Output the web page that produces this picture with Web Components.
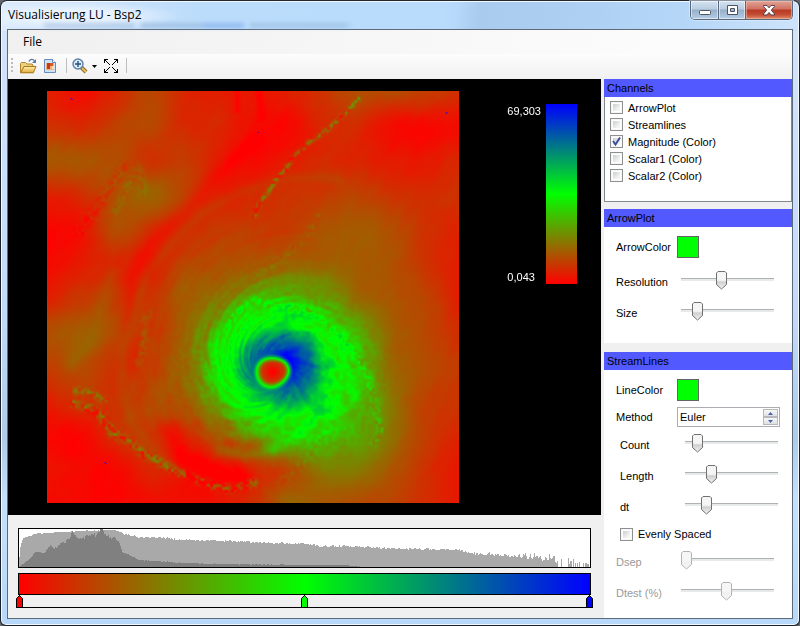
<!DOCTYPE html>
<html lang="de">
<head>
<meta charset="utf-8">
<title>Visualisierung LU - Bsp2</title>
<style>
  html, body { margin: 0; height: 100%; }
  body { background: #62666c; font: 11px/14px "Liberation Sans", Arial, sans-serif; color: #000; }
  .arrows color-row { margin-bottom: 2px; }
</style>
</head>
<body>
<app-window>
  <title-bar slot="title">Visualisierung LU - Bsp2</title-bar>
  <menu-strip slot="menu">File</menu-strip>
  <tool-strip slot="tools"></tool-strip>
  <field-view slot="view" high="69,303" low="0,043"></field-view>
  <transfer-editor slot="editor"></transfer-editor>
  <side-panel slot="side" heading="Channels" class="list" style="--body-border:1px solid #828790">
    <check-row label="ArrowPlot"></check-row>
    <check-row label="Streamlines"></check-row>
    <check-row label="Magnitude (Color)" checked></check-row>
    <check-row label="Scalar1 (Color)"></check-row>
    <check-row label="Scalar2 (Color)"></check-row>
  </side-panel>
  <side-panel slot="side" heading="ArrowPlot" class="arrows">
    <color-row label="ArrowColor"></color-row>
    <slider-row label="Resolution" value="43"></slider-row>
    <slider-row label="Size" value="14"></slider-row>
  </side-panel>
  <side-panel slot="side" heading="StreamLines" class="streams">
    <color-row label="LineColor"></color-row>
    <spin-row label="Method" value="Euler"></spin-row>
    <slider-row inset label="Count" value="8"></slider-row>
    <slider-row inset label="Length" value="26"></slider-row>
    <slider-row inset label="dt" value="19"></slider-row>
    <check-row wide label="Evenly Spaced"></check-row>
    <slider-row disabled label="Dsep" value="0"></slider-row>
    <slider-row disabled label="Dtest (%)" value="49"></slider-row>
  </side-panel>
</app-window>

<script>
const define = (name, render, after) => customElements.define(name, class extends HTMLElement {
  constructor() {
    super();
    this.attachShadow({ mode: 'open' });
  }
  connectedCallback() {
    this.shadowRoot.innerHTML = '<style>*{box-sizing:border-box}</style>' + render(this);
    if (after) after(this.shadowRoot, this);
  }
});
const attr = (el, n) => el.getAttribute(n) || '';

define('app-window', () => `
<style>
  :host { display: flex; flex-direction: column; box-sizing: border-box; height: 100vh; min-height: 626px; padding: 0 7px 7px;
    border: 1px solid #1c222b; border-top-color: #23272e; border-radius: 7px 7px 6px 6px;
    box-shadow: inset 0 0 0 1px #f2f8ff;
    background:
      radial-gradient(ellipse 110px 14px at 70px 15px, #e8f3ff 0 40%, #e8f3ff00 100%) top / 100% 30px no-repeat,
      linear-gradient(100deg, #0000 0 57%, #a9cbee 60%, #b0d2f400 78%) top / 100% 30px no-repeat,
      linear-gradient(90deg, #dceafa, #bbdcfb 25%, #b9dcfc 55%, #acd0f3 65%, #b4d6f7 85%, #cde3fb) top / 100% 30px no-repeat,
      linear-gradient(#d3e5fa, #c2dafa 50%, #aecbea 70%, #c5e0fb 80%, #b7d8f9); }
  .client { flex: 1; display: flex; flex-direction: column; min-height: 0; border: 1px solid #5d6a7a; margin: 0 -1px -1px; background: #f0f0f0; }
  main { flex: 1; display: flex; gap: 3px; min-height: 0; }
  .left { flex: 1; min-width: 0; display: flex; flex-direction: column; }
  ::slotted([slot=view]) { flex: 1; min-height: 0; }
  aside { flex: 0 0 188px; min-width: 0; display: flex; flex-direction: column; }
  ::slotted(.list) { flex: 0 0 123px; margin-bottom: 7px; }
  ::slotted(.arrows) { flex: 0 0 134px; margin-bottom: 9px; }
  ::slotted(.streams) { flex: 1; }
</style>
<slot name="title"></slot>
<div class="client">
  <slot name="menu"></slot>
  <slot name="tools"></slot>
  <main>
    <div class="left"><slot name="view"></slot><slot name="editor"></slot></div>
    <aside><slot name="side"></slot></aside>
  </main>
</div>`);

define('title-bar', () => `
<style>
  :host { position: relative; flex: 0 0 28px; display: flex; justify-content: space-between; align-items: flex-start; }
  h1 { margin: 0; padding: 5px 0 0; font: 12px/18px "Open Sans", "Noto Sans", sans-serif; }
  .ghost { position: absolute; left: 36px; top: 22px; width: 310px; height: 5px; filter: blur(2px); opacity: .45;
    background: linear-gradient(90deg, #8caad0 0 90px, #0000 90px 97px, #7d9fc9 97px 160px, #5f8fe0 160px 200px, #0000 200px 206px, #86aace 206px 300px, #0000 310px); }
  .buttons { display: flex; margin-right: -1px; height: 19px; border: 1px solid #56677e; border-top: 0; border-radius: 0 0 5px 5px; overflow: hidden; box-shadow: 0 0 0 1px #e4f1ff88; }
  button { display: grid; place-items: center; width: 28px; padding: 0; border: 0; border-right: 1px solid #56677e;
    background: linear-gradient(#d4e3f2, #b9cce0 45%, #98afc9 50%, #b5cde6); box-shadow: inset 0 0 0 1px #ffffff88; }
  .max { width: 27px; }
  .close { width: 46px; border: 0; background: linear-gradient(#e3a394, #d07062 45%, #b93822 50%, #c34c34 75%, #e08b6b); box-shadow: inset 0 0 0 1px #f6c4b588; }
</style>
<h1><slot></slot></h1><div class="ghost"></div>
<div class="buttons">
  <button aria-label="Minimieren"><svg width="14" height="14"><rect x="1.5" y="7.500" width="11" height="4" rx="1" fill="#fff" stroke="#4b5563"/></svg></button>
  <button class="max" aria-label="Maximieren"><svg width="13" height="12"><path fill="#fff" stroke="#4b5563" fill-rule="evenodd" d="M1.500 1.500h10v9h-10zM4.500 4.500h4v3h-4z"/></svg></button>
  <button class="close" aria-label="Schließen"><svg width="14" height="13"><path fill="#fff" stroke="#53404a" stroke-linejoin="round" d="M1.500 1.500h3.500l2 2.300 2-2.300h3.500v1l-3.200 3.600 3.200 3.900v1h-3.500l-2-2.500-2 2.500h-3.500v-1l3.200-3.900-3.200-3.600z"/></svg></button>
</div>`);

define('menu-strip', () => `
<style>
  :host { flex: 0 0 24px; display: flex; background: linear-gradient(90deg, #f0f0f0, #fcfcfc 85%); }
  button { margin: 0 0 0 9px; padding: 0 6px; border: 0; background: none; color: inherit; font: 12px/22px "Open Sans", "Noto Sans", sans-serif; }
</style>
<button><slot></slot></button>`);

define('tool-strip', () => `
<style>
  :host { flex: 0 0 25px; display: flex; align-items: center; padding: 0 0 2px 3px; box-sizing: border-box; background: linear-gradient(#fdfdfd, #f0f0f0); border-radius: 0 0 4px 0; }
  button { display: block; padding: 0; border: 0; background: none; height: 18px; }
  svg { display: block; }
  .grip { width: 2px; height: 15px; margin-right: 7px; background: repeating-linear-gradient(#bdbdbd 0 2px, #0000 2px 4px); }
  .sep { width: 1px; height: 15px; background: #bdbdbd; }
</style>
<span class="grip"></span>
<button aria-label="Öffnen"><svg width="18" height="18" viewBox="0 0 18 18">
  <defs><linearGradient id="f" x2="0" y2="1"><stop stop-color="#fff0a8"/><stop offset="1" stop-color="#e2a93a"/></linearGradient></defs>
  <path d="M.5 15.500V6.500l1-1h4l1.500 1.500H12l1 1v7.500z" fill="#ecd07a" stroke="#b3852c"/>
  <path d="M.7 15.800 4 9.500H16l-2.700 6.300z" fill="url(#f)" stroke="#a87720"/>
  <path d="M9 4.500c1-2.500 4-3 5.500-.5" fill="none" stroke="#5d7b9d" stroke-width="1.300"/><path d="M16 2v4h-4z" fill="#5d7b9d"/></svg></button>
<button aria-label="Bild speichern" style="margin-left:4px"><svg width="16" height="18" viewBox="0 0 16 18">
  <path d="M2.500 2.500h8l3 3v10h-11z" fill="#cfe1f6" stroke="#668bbd"/><path d="M10.500 2.500v3h3" fill="#fff" stroke="#668bbd"/>
  <path d="M4 6h8v7H4z" fill="#f4b17a"/><path d="M5 6h3v6H5z" fill="#bd3b20"/><path d="M8 6h3v3H8z" fill="#d75a20"/><path d="M10 9h2v3h-2z" fill="#ffe2a2"/></svg></button>
<span class="sep" style="margin:0 5px 0 8px"></span>
<button aria-label="Zoom"><svg width="28" height="18" viewBox="0 0 28 18">
  <path d="M9.500 10.500 14 15" stroke="#8a6a25" stroke-width="4"/><path d="M10 11l4 4" stroke="#e9c260" stroke-width="2"/>
  <circle cx="6" cy="7" r="5" fill="#d9ecfb" stroke="#5d80a8" stroke-width="1.400"/><path d="M3 7h6M6 4v6" stroke="#27507c" stroke-width="1.400"/>
  <path d="M20 8h5l-2.500 3z" fill="#000"/></svg></button>
<button aria-label="Einpassen" style="margin-left:4px"><svg width="16" height="18" viewBox="0 0 16 18" shape-rendering="crispEdges">
  <path fill="#000" d="M0 2h4v1h-2v1h1v1h1v1h1v1h1v1h-1v-1h-1v-1h-1v-1h-1v-1h-1v2h-1zM14 2h-4v1h2v1h-1v1h-1v1h-1v1h-1v1h1v-1h1v-1h1v-1h1v-1h1v2h1zM0 16h4v-1h-2v-1h1v-1h1v-1h1v-1h1v-1h-1v1h-1v1h-1v1h-1v1h-1v-2h-1zM14 16h-4v-1h2v-1h-1v-1h-1v-1h-1v-1h-1v-1h1v1h1v1h1v1h1v1h1v-2h1z"/></svg></button>
<span class="sep" style="margin-left:6px"></span>`);

/* Scalar field of wind magnitude: 0 = red, 1 = green, 2 = blue. */
const BASE = [
  [.10,.05,.15,.28,.15,.12,.10,.12,.20,.30,.28,.25,.18],
  [.20,.16,.25,.27,.16,.15,.05,.02,.15,.16,.05,.03,.06],
  [.33,.33,.30,.20,.24,.12,.03,.10,.16,.14,.10,.09,.15],
  [.13,.18,.30,.38,.25,.12,.15,.20,.22,.26,.20,.17,.19],
  [.02,.08,.30,.20,.16,.22,.22,.23,.32,.35,.30,.20,.14],
  [.04,.10,.15,.12,.26,.31,.34,.38,.38,.36,.32,.20,.12],
  [.12,.22,.22,.20,.36,.45,.60,.72,.68,.42,.33,.27,.12],
  [.30,.35,.28,.22,.38,.62,.90,.95,.90,.72,.38,.29,.17],
  [.25,.29,.20,.25,.40,.80,.95,.95,.95,.80,.42,.30,.22],
  [.12,.20,.20,.28,.36,.62,.95,.95,.95,.80,.47,.26,.20],
  [.03,.03,.18,.22,.18,.36,.62,.85,.78,.70,.45,.24,.15],
  [.08,.03,.02,.14,.06,.06,.16,.28,.47,.48,.34,.19,.08],
  [.04,.03,.03,.05,.06,.08,.18,.38,.34,.29,.26,.17,.10]];
/* Per direction (E, SE, S, SW, W, NW, N, NE): peak, end of core, end of plateau, 0.6 level, 0.35 level. */
const VORTEX = [
  [1.90,190,250,310,390],[1.66,178,240,310,390],[1.45,128,170,210,265],[1.40,124,162,200,250],
  [1.52,138,180,225,310],[1.62,148,195,245,310],[1.74,158,215,260,320],[2.02,182,230,270,340]];
/* Each ridge: strength, width, broken up by noise, path. */
const RIDGES = [
  [.25,8,1,[640,405,655,372,690,325,712,290,735,265,760,230,800,190,870,140,912,100,955,55]],
  [.20,12,1,[105,930,155,938,190,960]],
  [.26,14,1,[100,968,150,985,185,1010,215,1055,260,1080,300,1112,350,1140,400,1170,470,1195,510,1212,570,1225,640,1208]],
  [.16,12,1,[560,740,600,690,640,660,740,680,800,690,850,720,900,765,930,800,965,850,985,900,995,950,1010,1000,1020,1050,1000,1090]],
  [-.07,26,0,[640,180,560,250,430,400,330,490,275,590,262,750,268,850]],
  [.05,16,0,[900,300,845,290,740,292,600,335,480,400,400,480,320,570,290,680,250,800,245,920,270,1020,320,1090,400,1160]],
  [-.10,36,0,[385,1055,430,1120,520,1172,610,1190]],
  [.14,18,0,[850,950,820,1010,770,1070,700,1105]],
  [.10,16,0,[540,1110,620,1128,700,1108]],
  [-.10,16,0,[560,1085,640,1095,740,1055,800,1000]],
  [-.08,9,0,[590,30,590,90]],[-.08,12,0,[655,30,665,110]],
  [.07,18,1,[225,390,255,330,290,260,310,330]],
  [.06,24,0,[90,850,160,770,190,660,215,580]],
  [.07,14,1,[650,590,740,520,800,470,835,410]],
  [-.08,20,1,[120,450,180,370,250,260]],
  [.09,16,1,[290,850,310,780,320,700]],
  [.08,14,1,[720,1210,800,1130,850,1060,870,1000]]];

function hash(x, y) {
  let h = Math.imul(x, 374761393) + Math.imul(y, 668265263) | 0;
  h = Math.imul(h ^ (h >>> 13), 1274126177);
  return ((h ^ (h >>> 16)) >>> 0) / 4294967295 - .5;
}
function noise(x, y) {
  const i = Math.floor(x), j = Math.floor(y);
  let u = x - i, v = y - j;
  u = u * u * (3 - 2 * u); v = v * v * (3 - 2 * v);
  return (hash(i, j) * (1 - u) + hash(i + 1, j) * u) * (1 - v) + (hash(i, j + 1) * (1 - u) + hash(i + 1, j + 1) * u) * v;
}
const spline = (a, b, c, d, t) => b + .5 * t * (c - a + t * (2 * a - 5 * b + 4 * c - d + t * (3 * (b - c) + d - a)));
const clamp = (v, a, b) => Math.max(a, Math.min(b, v));
const smooth = (a, b, v) => { const t = clamp((v - a) / (b - a), 0, 1); return t * t * (3 - 2 * t); };
function baseAt(gx, gy) {
  const i = Math.floor(gx), j = Math.floor(gy), c = n => clamp(n, 0, 12);
  const rows = [-1, 0, 1, 2].map(k => {
    const r = BASE[c(j + k)];
    return spline(r[c(i - 1)], r[c(i)], r[c(i + 1)], r[c(i + 2)], gx - i);
  });
  return spline(...rows, gy - j);
}
function ridgeAt(r, x, y) {
  const p = r[3]; let best = 1e9;
  for (let k = 0; k + 3 < p.length; k += 2) {
    const dx = p[k + 2] - p[k], dy = p[k + 3] - p[k + 1];
    const t = clamp(((x - p[k]) * dx + (y - p[k + 1]) * dy) / (dx * dx + dy * dy), 0, 1);
    const ex = x - p[k] - t * dx, ey = y - p[k + 1] - t * dy;
    best = Math.min(best, ex * ex + ey * ey);
  }
  if (best > r[1] * r[1] * 6) return 0;
  const g = Math.exp(-best / (r[1] * r[1]));
  return r[0] * g * (r[2] ? clamp(.5 + 2.4 * noise(x / 9, y / 9), -.4, 1.3) : 1);
}
function fieldAt(px, py) {
  const x = 21 + px * 3, y = 33 + py * 3;
  let v = baseAt((x - 21) / 103, (y - 33) / 103);
  const dx = x - 697, dy = y - 874, r = Math.hypot(dx, dy), a = Math.atan2(dy, dx);
  const s = ((a / Math.PI * 4) + 8) % 8, i = Math.floor(s);
  const P = [0, 1, 2, 3, 4].map(k => spline(VORTEX[(i + 7) % 8][k], VORTEX[i % 8][k], VORTEX[(i + 1) % 8][k], VORTEX[(i + 2) % 8][k], s - i));
  /* The texture turns with the radius, so streaks wind into the eye. */
  const turn = a - Math.log(r + 20) * 1.4;
  const sx = Math.cos(turn) * 7, sy = Math.sin(turn) * 7;
  const swirl = noise(sx + 40 + r / 60, sy + r / 20);
  const grain = noise(x / 11 + 70, y / 11);
  if (r < P[4]) {
    const eye = 41 + 3 * Math.cos(2 * a + .4) + 1.5 * Math.cos(3 * a + 1);
    const fall = .42 + .58 * Math.exp(-Math.max(0, r - 62) / 55);
    let w;
    if (r < eye + 20) {
      const core = .26 * Math.pow(Math.min(r, 42) / 36, 1.3);
      w = core + (P[0] - core) * smooth(eye - 12, eye + 20, r);
    } else if (r < P[1]) w = 1 + (P[0] - 1) * fall * (1 - smooth(P[1] * .55, P[1] + 4, r));
    else if (r < P[2]) w = 1 - .14 * smooth(P[1], P[2], r);
    else if (r < P[3]) w = .86 - .26 * (r - P[2]) / (P[3] - P[2]);
    else w = .6 - .25 * (r - P[3]) / (P[4] - P[3]);
    const k = 1 - smooth(P[2] * .9, P[4], r);
    v = v * (1 - k) + w * k;
    v += (swirl * .22 + grain * .1) * k * smooth(eye + 12, eye + 40, r);
  }
  v += grain * .06 * (1 - smooth(180, 480, r)) * smooth(120, 180, r);
  v += swirl * .07 * (1 - smooth(300, 560, r)) * smooth(100, 200, r) * (1 - .7 * smooth(0, 200, dx));
  v += noise(x / 26 + y / 60, y / 40) * .03;
  for (const q of RIDGES) v += ridgeAt(q, x, y);
  return clamp(v, 0, 2);
}

define('field-view', el => `
<style>
  :host { display: flex; justify-content: space-between; padding: 12px 24px 12px 39px; background: #000; color: #fff; }
  canvas { display: block; height: 100%; aspect-ratio: 1; }
  .legend { display: grid; grid-template-columns: auto 31px; column-gap: 5px; height: 180px; margin-top: 13px; }
  .labels { display: flex; flex-direction: column; justify-content: space-between; }
  .bar { background: linear-gradient(#00f, #0f0 50%, #f00); }
</style>
<canvas width="412" height="412" role="img" aria-label="Magnitude"></canvas>
<div class="legend"><div class="labels"><span>${attr(el, 'high')}</span><span>${attr(el, 'low')}</span></div><div class="bar"></div></div>`,
root => {
  const ctx = root.querySelector('canvas').getContext('2d');
  const img = ctx.createImageData(412, 412);
  for (let y = 0, o = 0; y < 412; y++) for (let x = 0; x < 412; x++, o += 4) {
    const v = fieldAt(x, y);
    img.data[o] = 255 * Math.max(0, 1 - v);
    img.data[o + 1] = 255 * (1 - Math.abs(1 - v));
    img.data[o + 2] = 255 * Math.max(0, v - 1);
    img.data[o + 3] = 255;
  }
  ctx.putImageData(img, 0, 0);
  ctx.fillStyle = '#70108c';
  for (const [x, y] of [[23, 7], [24, 8], [398, 22], [399, 21], [210, 41], [57, 371], [58, 372]]) ctx.fillRect(x, y, 2, 1);
});

/* Histogram outlines as x, height pairs in a 571 x 38 box. */
const LIGHT = [0,10,1,20,2,24,4,29,10,31,15,33,27,34,45,35,60,36,96,37,102,34,118,30,145,29,165,27,215,26,250,24,290,23,301,21,324,21,345,20,364,19,386,18,414,18,441,17,451,14,481,12,505,10,528,10,535,7,545,6,571,2];
const DARK = [0,0,2,2,8,6,16,15,25,14,31,22,35,18,40,22,50,28,53,36,59,28,70,31,73,34,76,31,82,39,85,32,92,29,96,30,100,24,103,15,110,12,119,7,150,5,165,4,200,3,280,2,325,2,333,1,345,0,571,0];
function bars(points, rough) {
  let d = 'M0 38', k = 0;
  for (let x = 0; x < 571; x++) {
    while (k + 4 < points.length && x >= points[k + 2]) k += 2;
    const t = (x - points[k]) / (points[k + 2] - points[k]);
    let h = points[k + 1] + t * (points[k + 3] - points[k + 1]);
    if (h > 0) h += noise(x * .8, 3) * rough(x);
    if (rough(x) > 5 && x > 538 && hash(x, 9) > .05) h = 0;
    d += `V${38 - clamp(Math.round(h), 0, 38)}H${x + 1}`;
  }
  return d + 'V38z';
}
define('histogram-view', () => `
<style>
  :host { display: block; box-sizing: border-box; height: 40px; border: 1px solid #000; background: #fff; }
  svg { display: block; width: 100%; height: 100%; }
</style>
<svg viewBox="0 0 571 38" preserveAspectRatio="none" shape-rendering="crispEdges" role="img" aria-label="Histogramm">
  <path fill="#a9a9a9" d="${bars(LIGHT, x => x < 97 ? 1 : x < 440 ? 2 : x < 500 ? 4 : 9)}"/>
  <path fill="#808080" d="${bars(DARK, x => x > 35 && x < 100 ? 4 : 1)}"/>
</svg>`);

define('color-stop', el => `
<style>
  :host { display: block; width: 7px; height: 14px; }
  button { display: block; width: 7px; height: 14px; padding: 0; border: 0; background: none; }
  svg { display: block; }
</style>
<button aria-label="Farbmarke"><svg width="7" height="14"><path d="M.5 13.500V4.500L3.500 1.500 6.500 4.500v9z" fill="${attr(el, 'color')}" stroke="#000"/><path d="M3.500 0v2" stroke="#000"/></svg></button>`);

define('transfer-editor', () => `
<style>
  :host { display: block; padding: 13px 10px 10px; }
  .ramp { height: 22px; margin-top: 5px; border: 1px solid #000; background: linear-gradient(90deg, #f00, #0f0 50%, #00f); }
  .stops { display: flex; justify-content: space-between; margin: -1px -2px 0; height: 14px;
    background: linear-gradient(#000, #000) bottom / 100% 1px no-repeat; }
</style>
<histogram-view></histogram-view>
<div class="ramp"></div>
<div class="stops"><color-stop color="#f00"></color-stop><color-stop color="#0f0"></color-stop><color-stop color="#00f"></color-stop></div>`);

define('side-panel', el => `
<style>
  :host { display: flex; flex-direction: column; min-width: 0; background: #fff; }
  h2 { margin: 0; flex: 0 0 18px; padding: 1px 0 0 3px; background: #5159ff; font: inherit; line-height: 17px; }
  div { flex: 1; border: var(--body-border, 0); border-top-width: 0; padding-top: 3px; }
  :host(.list) div { padding-top: 2px; }
</style>
<h2>${attr(el, 'heading')}</h2><div><slot></slot></div>`);

define('check-row', el => `
<style>
  :host { display: flex; height: 17px; padding-left: 5px; }
  :host([wide]) { height: 24px; padding-left: 16px; }
  label { display: flex; align-items: center; gap: 5px; }
  input { appearance: none; margin: 0; width: 13px; height: 13px; border: 1px solid #8e8f8f;
    background: linear-gradient(135deg, #c9cdd2, #f4f4f4 75%) content-box; padding: 2px; box-shadow: inset 0 0 0 1px #f6f6f6; }
  input:checked { background: url('data:image/svg+xml,<svg xmlns="http://www.w3.org/2000/svg" width="11" height="11"><path d="M2 5l2.500 3.500L9 1.500" fill="none" stroke="%233b4f9b" stroke-width="2"/></svg>') border-box 1px 1px no-repeat, linear-gradient(135deg, #c9cdd2, #f4f4f4 75%) content-box; }
</style>
<label><input type="checkbox" ${el.hasAttribute('checked') ? 'checked' : ''}>${attr(el, 'label')}</label>`);

define('color-row', el => `
<style>
  :host { display: flex; align-items: center; height: 34px; padding-left: 12px; }
  label { width: 61px; }
  input { appearance: none; width: 22px; height: 22px; padding: 0; border: 1px solid #646464; background: none; }
  input::-webkit-color-swatch-wrapper { padding: 0; }
  input::-webkit-color-swatch { border: 0; border-radius: 0; }
</style>
<label for="c">${attr(el, 'label')}</label><input id="c" type="color" value="#00ff00">`);

define('spin-row', el => `
<style>
  :host { display: flex; align-items: center; height: 20px; padding: 0 12px; margin-bottom: 2px; }
  label { flex: 0 0 61px; }
  .box { flex: 1; min-width: 0; display: flex; height: 20px; border: 1px solid #abadb3; padding: 1px; }
  input { flex: 1; min-width: 0; width: 100%; border: 0; padding: 0 1px; font: inherit; color: inherit; background: none; }
  .spin { display: flex; flex: 0 0 15px; flex-direction: column; }
  button { flex: 1; display: grid; place-items: center; padding: 0; border: 1px solid #b6b8bc; background: linear-gradient(#f8f8f8, #dfe0e2); min-height: 0; }
  svg { display: block; }
</style>
<label for="m">${attr(el, 'label')}</label>
<div class="box"><input id="m" type="text" value="${attr(el, 'value')}">
  <div class="spin"><button aria-label="Vorheriger"><svg width="5" height="3"><path d="M0 3 2.500 0 5 3z" fill="#4961a8"/></svg></button>
  <button aria-label="Nächster"><svg width="5" height="3"><path d="M0 0h5L2.500 3z" fill="#4961a8"/></svg></button></div></div>`);

const thumb = (line, a, b) => `url('data:image/svg+xml,<svg xmlns="http://www.w3.org/2000/svg" width="11" height="19"><defs><linearGradient id="g" x2="0" y2="1"><stop offset=".5" stop-color="${a}"/><stop offset=".6" stop-color="${b}"/><stop offset="1" stop-color="${a}"/></linearGradient></defs><path d="M.5 2L2 .5h7L10.500 2v11.500l-5 4.500-5-4.500z" fill="url(%23g)" stroke="${line}"/></svg>')`;
define('slider-row', el => `
<style>
  :host { display: flex; align-items: center; height: 31px; padding: 0 18px 0 12px; }
  :host([inset]) { padding: 0 14px 0 16px; }
  :host([disabled]) { color: #9a9a9a; }
  label { flex: 0 0 65px; }
  input { appearance: none; flex: 1; min-width: 0; width: 100%; height: 19px; margin: 5px 0 0; align-self: flex-start; background: none; }
  input::-webkit-slider-runnable-track { height: 19px; background:
    linear-gradient(#aeb2b2 0 1px, #e7eaea 1px 3px) 0 7px / 100% 3px no-repeat; }
  input::-webkit-slider-thumb { appearance: none; width: 11px; height: 19px; background: ${thumb('%23707070', '%23f5f5f5', '%23cfcfcf')}; }
  input:disabled::-webkit-slider-thumb { background: ${thumb('%23b0b4b4', '%23f6f6f6', '%23f0f0f0')}; }
</style>
<label for="s">${attr(el, 'label')}</label><input id="s" type="range" min="0" max="100" value="${attr(el, 'value')}" ${el.hasAttribute('disabled') ? 'disabled' : ''}>`);
</script>
</body>
</html>
